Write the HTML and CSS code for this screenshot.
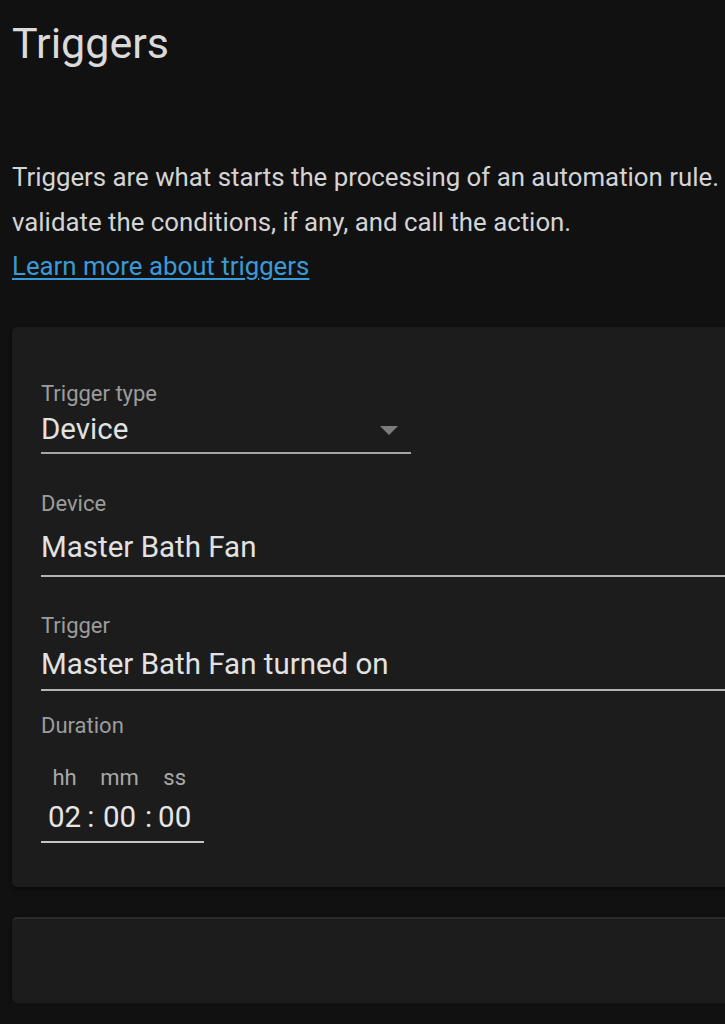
FILE: index.html
```html
<!DOCTYPE html>
<html lang="en">
<head>
  <meta charset="UTF-8" />
  <meta name="viewport" content="width=device-width, initial-scale=1.0"/>
  <title>Triggers | Automation Editor</title>
  <link rel="stylesheet" href="styles.css">
</head>
<body>

<div class="page">
  <h1 class="title">Triggers</h1>

  <p class="intro">
    <span class="line">Triggers are what starts the processing of an automation rule.</span><br>
    <span class="line">validate the conditions, if any, and call the action.</span><br>
    <a href="#" class="learn-link">Learn more about triggers</a>
  </p>

  <!-- Trigger card -->
  <div class="card">
    <div class="field field-select">
      <div class="field-label">Trigger type</div>
      <div class="field-value">
        <span>Device</span>
        <svg class="dropdown-arrow" width="20" height="10" viewBox="0 0 20 10">
          <path d="M1 0 L19 0 L10 9 Z" fill="#7c7c7c"/>
        </svg>
      </div>
    </div>

    <div class="field field-device">
      <div class="field-label">Device</div>
      <div class="field-value">Master Bath Fan</div>
    </div>

    <div class="field field-trigger">
      <div class="field-label">Trigger</div>
      <div class="field-value">Master Bath Fan turned on</div>
    </div>

    <div class="field field-duration">
      <div class="field-label">Duration</div>
      <div class="duration">
        <span class="unit">hh</span>
        <span></span>
        <span class="unit">mm</span>
        <span></span>
        <span class="unit">ss</span>
        <span class="num">02</span>
        <span class="sep">:</span>
        <span class="num">00</span>
        <span class="sep">:</span>
        <span class="num">00</span>
      </div>
    </div>
  </div>

  <!-- Next card (collapsed) -->
  <div class="card card-empty"></div>
</div>

</body>
</html>
```

FILE: styles.css
```css
body, html {
  margin: 0;
  background: #111111;
  font-family: Roboto, "Noto Sans", sans-serif;
  color: #dcdcdc;
  overflow: hidden;
}

.page {
  width: 1400px;
  padding: 18px 0 0 12px;
}

.title {
  margin: 0;
  font-size: 43px;
  line-height: 50px;
  font-weight: 400;
  color: #dadada;
}

.intro {
  margin: 87px 0 0;
  font-size: 25.8px;
  line-height: 44.5px;
  color: #d4d4d4;
}

.intro .line {
  white-space: nowrap;
}

.learn-link {
  color: #3a9ad6;
  text-decoration: underline;
  text-underline-offset: 3px;
  text-decoration-thickness: 2px;
}

.card {
  margin-top: 38px;
  background: #1c1c1c;
  border-radius: 5px;
  box-shadow: 0 2px 4px rgba(0, 0, 0, 0.45);
  padding: 54px 29px 0;
  height: 506px;
}

.card-empty {
  margin-top: 30px;
  height: 84px;
  padding: 0;
  border-top: 2px solid #2b2b2b;
}

.field-label {
  font-size: 22px;
  line-height: 26px;
  color: #9c9c9c;
}

.field-value {
  font-size: 29.5px;
  line-height: 36px;
  color: #e2e2e2;
  border-bottom: 2px solid #b4b4b4;
}

.field-select .field-value {
  width: 370px;
  margin-top: 4px;
  padding-bottom: 5px;
  display: flex;
  justify-content: space-between;
  align-items: center;
  border-bottom-color: #a6a6a6;
}

.dropdown-arrow {
  margin-right: 12px;
  margin-top: 4px;
}

.field-device {
  margin-top: 37px;
}

.field-device .field-value {
  margin-top: 12px;
  padding-bottom: 10px;
}

.field-trigger {
  margin-top: 36px;
}

.field-trigger .field-value {
  margin-top: 7px;
  padding-bottom: 7px;
}

.field-duration {
  margin-top: 22px;
}

.duration {
  display: inline-grid;
  grid-template-columns: auto auto auto auto auto;
  column-gap: 6px;
  row-gap: 8px;
  width: 156px;
  margin-top: 26px;
  padding: 0 0 6px 7px;
  border-bottom: 2px solid #c4c4c4;
  text-align: center;
  justify-content: start;
}

.unit {
  font-size: 22px;
  line-height: 26px;
  color: #a8a8a8;
}

.num, .sep {
  font-size: 29.5px;
  line-height: 36px;
  color: #e6e6e6;
}
```
